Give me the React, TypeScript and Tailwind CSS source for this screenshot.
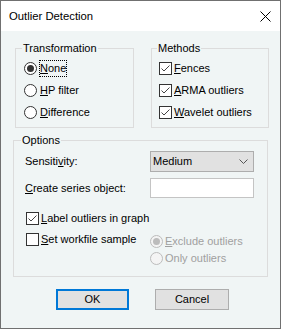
import React from "react";

const U = ({ children }: { children: React.ReactNode }) => (
  <span className="underline underline-offset-[1px] decoration-[1px]">{children}</span>
);

function Radio({ checked, disabled }: { checked?: boolean; disabled?: boolean }) {
  return (
    <span
      className={
        "w-[13px] h-[13px] shrink-0 rounded-full border flex items-center justify-center " +
        (disabled ? "border-[#bcbcbc] bg-[#f4f4f4]" : "border-[#333333] bg-white")
      }
    >
      {checked && (
        <span
          className={
            "w-[7px] h-[7px] rounded-full " + (disabled ? "bg-[#bcbcbc]" : "bg-[#333333]")
          }
        />
      )}
    </span>
  );
}

function Check({ checked }: { checked?: boolean }) {
  return (
    <span className="w-[13px] h-[13px] shrink-0 border border-[#333333] bg-white flex items-center justify-center">
      {checked && (
        <svg width="11" height="11" viewBox="0 0 11 11">
          <polyline points="1.5,5.5 4,8 9.5,2.5" fill="none" stroke="#444" strokeWidth="1" />
        </svg>
      )}
    </span>
  );
}

export default function App() {
  return (
    <div className="w-[281px] h-[329px] flex flex-col border border-[#707070] bg-white text-black font-['Liberation_Sans',Arial,sans-serif] text-[11px] leading-[13px]">
      <div className="h-[30px] shrink-0 flex items-center pl-[8px] pr-[9px] bg-white">
        <span className="flex-1 text-[11.3px]">Outlier Detection</span>
        <svg width="11" height="11" viewBox="0 0 11 11">
          <line x1="0.5" y1="0.5" x2="10.5" y2="10.5" stroke="#000" strokeWidth="1" />
          <line x1="10.5" y1="0.5" x2="0.5" y2="10.5" stroke="#000" strokeWidth="1" />
        </svg>
      </div>
      <div className="flex-1 bg-[#f0f5f5] flex flex-col">
        <div className="flex pt-[17px] pl-[14px] gap-[17px]">
          <div className="relative w-[119px] h-[80px] border border-[#dcdcdc] pt-[8px] pl-[8px]">
            <span className="absolute left-[6px] top-[-7px] px-[1px] bg-[#f0f5f5]">Transformation</span>
            <div className="h-[22px] flex items-center">
              <Radio checked />
              <span className="ml-[2px] border border-dotted border-black px-[0px] leading-[15px]">
                <U>N</U>one
              </span>
            </div>
            <div className="h-[22px] flex items-center">
              <Radio />
              <span className="ml-[3px]">
                <U>H</U>P filter
              </span>
            </div>
            <div className="h-[22px] flex items-center">
              <Radio />
              <span className="ml-[3px]">
                <U>D</U>ifference
              </span>
            </div>
          </div>
          <div className="relative w-[118px] h-[80px] border border-[#dcdcdc] pt-[8px] pl-[7px]">
            <span className="absolute left-[5px] top-[-7px] px-[1px] bg-[#f0f5f5]">Methods</span>
            <div className="h-[22px] flex items-center">
              <Check checked />
              <span className="ml-[2px]">
                <U>F</U>ences
              </span>
            </div>
            <div className="h-[22px] flex items-center">
              <Check checked />
              <span className="ml-[2px]">
                <U>A</U>RMA outliers
              </span>
            </div>
            <div className="h-[22px] flex items-center">
              <Check checked />
              <span className="ml-[2px]">
                <U>W</U>avelet outliers
              </span>
            </div>
          </div>
        </div>

        <div className="relative ml-[12px] mt-[12px] w-[255px] h-[137px] border border-[#dcdcdc] pt-[10px] pl-[11px]">
          <span className="absolute left-[7px] top-[-7px] px-[1px] bg-[#f0f5f5]">Options</span>
          <div className="flex items-center h-[21px]">
            <span className="w-[125px]">
              Sensiti<U>v</U>ity:
            </span>
            <div className="w-[104px] h-[21px] border border-[#adadad] bg-[#e1e1e1] flex items-center pl-[2px] pr-[5px]">
              <span className="flex-1">Medium</span>
              <svg width="9" height="5" viewBox="0 0 9 5">
                <polyline points="0.5,0.5 4.5,4.5 8.5,0.5" fill="none" stroke="#555" strokeWidth="1" />
              </svg>
            </div>
          </div>
          <div className="flex items-center h-[20px] mt-[6px]">
            <span className="w-[125px]">
              <U>C</U>reate series object:
            </span>
            <div className="w-[104px] h-[20px] border border-[#c4c4c4] bg-white" />
          </div>
          <div className="flex items-center h-[13px] mt-[14px] ml-[1px]">
            <Check checked />
            <span className="ml-[2px]">
              <U>L</U>abel outliers in graph
            </span>
          </div>
          <div className="flex mt-[8px]">
            <div className="w-[124px] ml-[1px] flex items-center h-[13px]">
              <Check />
              <span className="ml-[2px]">
                <U>S</U>et workfile sample
              </span>
            </div>
            <div className="flex flex-col text-[#a0a0a0]">
              <div className="h-[16px] flex items-center">
                <Radio checked disabled />
                <span className="ml-[2px]">
                  <U>E</U>xclude outliers
                </span>
              </div>
              <div className="h-[18px] flex items-center">
                <Radio disabled />
                <span className="ml-[2px]">Only outliers</span>
              </div>
            </div>
          </div>
        </div>

        <div className="flex mt-[12px] pl-[55px] gap-[26px]">
          <button className="w-[73px] h-[21px] border-2 border-[#0078d7] bg-[#e1e1e1] flex items-center justify-center">
            OK
          </button>
          <button className="w-[74px] h-[21px] border border-[#adadad] bg-[#e1e1e1] flex items-center justify-center">
            Cancel
          </button>
        </div>
      </div>
    </div>
  );
}
